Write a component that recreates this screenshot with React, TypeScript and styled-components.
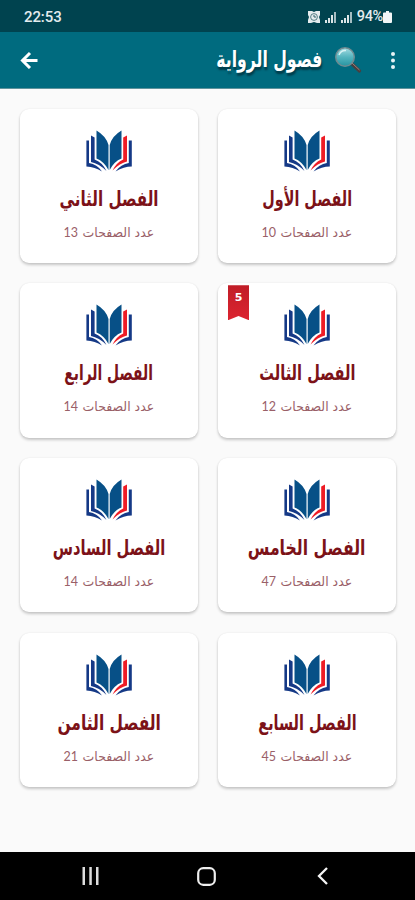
import React from 'react';
import styled, { createGlobalStyle } from 'styled-components';

const GlobalStyle = createGlobalStyle`
  * { box-sizing: border-box; }
  body { margin: 0; background: #fafafa; }
`;

const Screen = styled.div`
  width: 415px;
  height: 900px;
  display: flex;
  flex-direction: column;
  overflow: hidden;
  background: #fafafa;
  font-family: Roboto, 'DejaVu Sans', sans-serif;
`;

const StatusBar = styled.div`
  height: 32px;
  flex: none;
  display: flex;
  align-items: center;
  justify-content: space-between;
  padding: 1px 23px 0 24px;
  background: #00434f;
  color: #e4ecee;
  font-size: 15px;
`;

const Clock = styled.span`
  font-weight: 500;
  letter-spacing: -0.1px;
`;

const StatusIcons = styled.div`
  display: flex;
  align-items: center;
  gap: 5px;
`;

const Battery = styled.span`
  display: flex;
  align-items: center;
  font-size: 14.5px;
  font-weight: 500;
  letter-spacing: -0.3px;
`;

const AppBar = styled.header`
  height: 57px;
  flex: none;
  display: flex;
  align-items: center;
  padding: 0 18px 1px 20px;
  background: #006b7f;
  border-bottom: 1px solid #5f939c;
`;

const AppTitle = styled.h1`
  margin: 0 11px 2px auto;
  width: 107px;
  display: flex;
  justify-content: center;
  direction: rtl;
  color: #fff;
  font: bold 19px/28px 'DejaVu Sans', sans-serif;
  white-space: nowrap;
  text-shadow: 1px 2px 2px rgba(0, 20, 30, 0.55);
`;

const Stretched = styled.span<{ $x: number; $y: number }>`
  display: inline-block;
  flex: none;
  transform: scale(${(p) => p.$x}, ${(p) => p.$y});
`;

const MenuSlot = styled.div`
  display: flex;
  margin-left: 27px;
`;

const ChapterGrid = styled.main`
  flex: 1;
  direction: rtl;
  display: grid;
  grid-template-columns: 178px 178px;
  grid-auto-rows: 154.5px;
  gap: 20.2px 20px;
  padding: 19.5px 19px 0 20px;
`;

const Card = styled.article`
  position: relative;
  display: flex;
  flex-direction: column;
  align-items: center;
  padding-top: 21px;
  background: #fff;
  border-radius: 9px;
  box-shadow: 0 2px 3px rgba(0, 0, 0, 0.2), 0 0 2px rgba(0, 0, 0, 0.08);
`;

const CardTitle = styled.h2`
  margin: 10px 0 0;
  height: 34px;
  display: flex;
  justify-content: center;
  color: #7c1218;
  font: bold 18px/34px 'DejaVu Sans', sans-serif;
  white-space: nowrap;
`;

const PageLine = styled.div`
  width: 91px;
  height: 24px;
  margin-top: 5px;
  display: flex;
  align-items: center;
  justify-content: space-between;
  color: #9a6068;
`;

const PageLabel = styled.span`
  width: 72px;
  display: flex;
  justify-content: center;
  font: 12px/24px 'DejaVu Sans', sans-serif;
  white-space: nowrap;
`;

const PageCount = styled.span`
  font: 12.5px/22px Lato, sans-serif;
`;

const Ribbon = styled.div`
  position: absolute;
  left: 10px;
  top: 2px;
  width: 21px;
  height: 35px;
  padding-top: 5px;
  text-align: center;
  background: linear-gradient(#c01d27, #dc2430);
  clip-path: polygon(0 0, 100% 0, 100% 100%, 50% 88%, 0 100%);
  color: #fff;
  font: bold 11px/16px 'DejaVu Sans', sans-serif;
`;

const NavBar = styled.nav`
  height: 48px;
  flex: none;
  display: flex;
  align-items: center;
  background: #000;
  padding: 0 87px 0 82px;
`;

const HomeSlot = styled.div`
  display: flex;
  margin: 0 auto 0 98px;
`;

const BookIcon = () => (
  <svg width="46" height="42" viewBox="0 0 46 42">
    <path d="M.4 10.500H3V33Q11 34 16 41.500Q9 37 .4 36.500Z" fill="#153986" />
    <path d="M5 5.500L8.600 7.500V29.500Q16 32 20.500 41Q13 33.500 5 32Z" fill="#153986" />
    <path d="M10.500 .5Q20 6 22.500 15V40Q18 31.500 10.500 28.500Z" fill="#075087" />
    <path d="M35.500 .5Q26 6 23.700 15V40Q28 31.500 35.500 28.500Z" fill="#075087" />
    <path d="M37.200 7.500L41 5.500V31.500Q34 33 26.500 40.500Q30.500 32.500 37.200 29.500Z" fill="#ee1c25" />
    <path d="M42.800 10.500H45.800V36.500Q38 36.500 29.500 41.500Q35 34 42.800 33Z" fill="#153986" />
  </svg>
);

const MagnifierIcon = () => (
  <svg width="28" height="28" viewBox="0 0 28 28">
    <defs>
      <linearGradient id="lens" x1="0" y1="0" x2="0" y2="1">
        <stop offset="0" stopColor="#a5dce2" />
        <stop offset=".5" stopColor="#55b5bf" />
        <stop offset="1" stopColor="#2593a0" />
      </linearGradient>
    </defs>
    <path d="M17 17L25.500 25" stroke="#493f40" strokeWidth="3.200" strokeLinecap="round" />
    <path d="M18 17L25.500 24" stroke="#a0847c" strokeWidth="1" />
    <circle cx="11" cy="11" r="9.300" fill="url(#lens)" stroke="#6f8b91" strokeWidth="1.500" />
    <path d="M5 9Q7 4 12 4.500" stroke="#d8f3f4" strokeWidth="1.500" fill="none" />
  </svg>
);

const SignalIcon = () => (
  <svg width="11" height="12" viewBox="0 0 11 12" fill="#dce6e8">
    <path d="M0 9h2v3H0zM3 7h2v5H3zM6 4h2v8H6z" />
    <path d="M9 1h2v11H9z" opacity=".75" />
  </svg>
);

const AlarmIcon = () => (
  <svg width="12" height="12" viewBox="0 0 12 12">
    <path d="M0 0h4l2 1 2-1h4v4l-1 2 1 3v3H9L6 11l-3 1H0V9l1-3-1-2z" fill="#e4ecee" />
    <circle cx="6" cy="6" r="3.400" fill="none" stroke="#31626b" strokeWidth=".8" />
    <path d="M6 4v2h2" fill="none" stroke="#31626b" />
  </svg>
);

interface Chapter {
  title: string;
  pages: number;
  stretch: number;
  ribbon?: string;
}

const chapters: Chapter[] = [
  { title: 'الفصل الأول', pages: 10, stretch: 0.8 },
  { title: 'الفصل الثاني', pages: 13, stretch: 0.84 },
  { title: 'الفصل الثالث', pages: 12, stretch: 0.81, ribbon: '5' },
  { title: 'الفصل الرابع', pages: 14, stretch: 0.77 },
  { title: 'الفصل الخامس', pages: 47, stretch: 0.87 },
  { title: 'الفصل السادس', pages: 14, stretch: 0.815 },
  { title: 'الفصل السابع', pages: 45, stretch: 0.8 },
  { title: 'الفصل الثامن', pages: 21, stretch: 0.86 },
];

export default function App() {
  return (
    <Screen>
      <GlobalStyle />
      <StatusBar>
        <Clock>22:53</Clock>
        <StatusIcons>
          <AlarmIcon />
          <SignalIcon />
          <SignalIcon />
          <Battery>
            94%
            <svg width="9" height="12" viewBox="0 0 9 12" fill="#f2f6f7">
              <path d="M3 0h3v1.500h2q1 0 1 1V11q0 1-1 1H1q-1 0-1-1V2.500q0-1 1-1h2z" />
            </svg>
          </Battery>
        </StatusIcons>
      </StatusBar>
      <AppBar>
        <svg width="18" height="18" viewBox="0 0 18 18" fill="none" stroke="#fff" strokeWidth="3">
          <path d="M17.500 9.500H2.500M10 2L2.500 9.500l7.500 7.500" />
        </svg>
        <AppTitle>
          <Stretched $x={0.825} $y={1.2}>فصول الرواية</Stretched>
        </AppTitle>
        <MagnifierIcon />
        <MenuSlot>
          <svg width="8" height="20" viewBox="0 0 8 20" fill="#e8f4f6">
            <circle cx="4" cy="4" r="2" />
            <circle cx="4" cy="10.500" r="2" />
            <circle cx="4" cy="17" r="2" />
          </svg>
        </MenuSlot>
      </AppBar>
      <ChapterGrid>
        {chapters.map((c) => (
          <Card key={c.title}>
            {c.ribbon && <Ribbon>{c.ribbon}</Ribbon>}
            <BookIcon />
            <CardTitle>
              <Stretched $x={c.stretch} $y={1.15}>{c.title}</Stretched>
            </CardTitle>
            <PageLine>
              <PageLabel>
                <Stretched $x={1.04} $y={1.05}>عدد الصفحات</Stretched>
              </PageLabel>
              <PageCount>{c.pages}</PageCount>
            </PageLine>
          </Card>
        ))}
      </ChapterGrid>
      <NavBar>
        <svg width="17" height="18" viewBox="0 0 17 18" fill="#ddd">
          <path d="M0.500 0h2.500v18H0.500zM7.300 0h2.500v18H7.300zM14 0h2.500v18h-2.500z" />
        </svg>
        <HomeSlot>
          <svg width="19" height="19" viewBox="0 0 19 19" fill="none" stroke="#eee" strokeWidth="2.200">
            <rect x="1.200" y="1.200" width="16.600" height="16.600" rx="5" />
          </svg>
        </HomeSlot>
        <svg width="11" height="18" viewBox="0 0 11 18" fill="none" stroke="#f5f5f5" strokeWidth="2.300">
          <path d="M10 1L2 9l8 8" />
        </svg>
      </NavBar>
    </Screen>
  );
}
